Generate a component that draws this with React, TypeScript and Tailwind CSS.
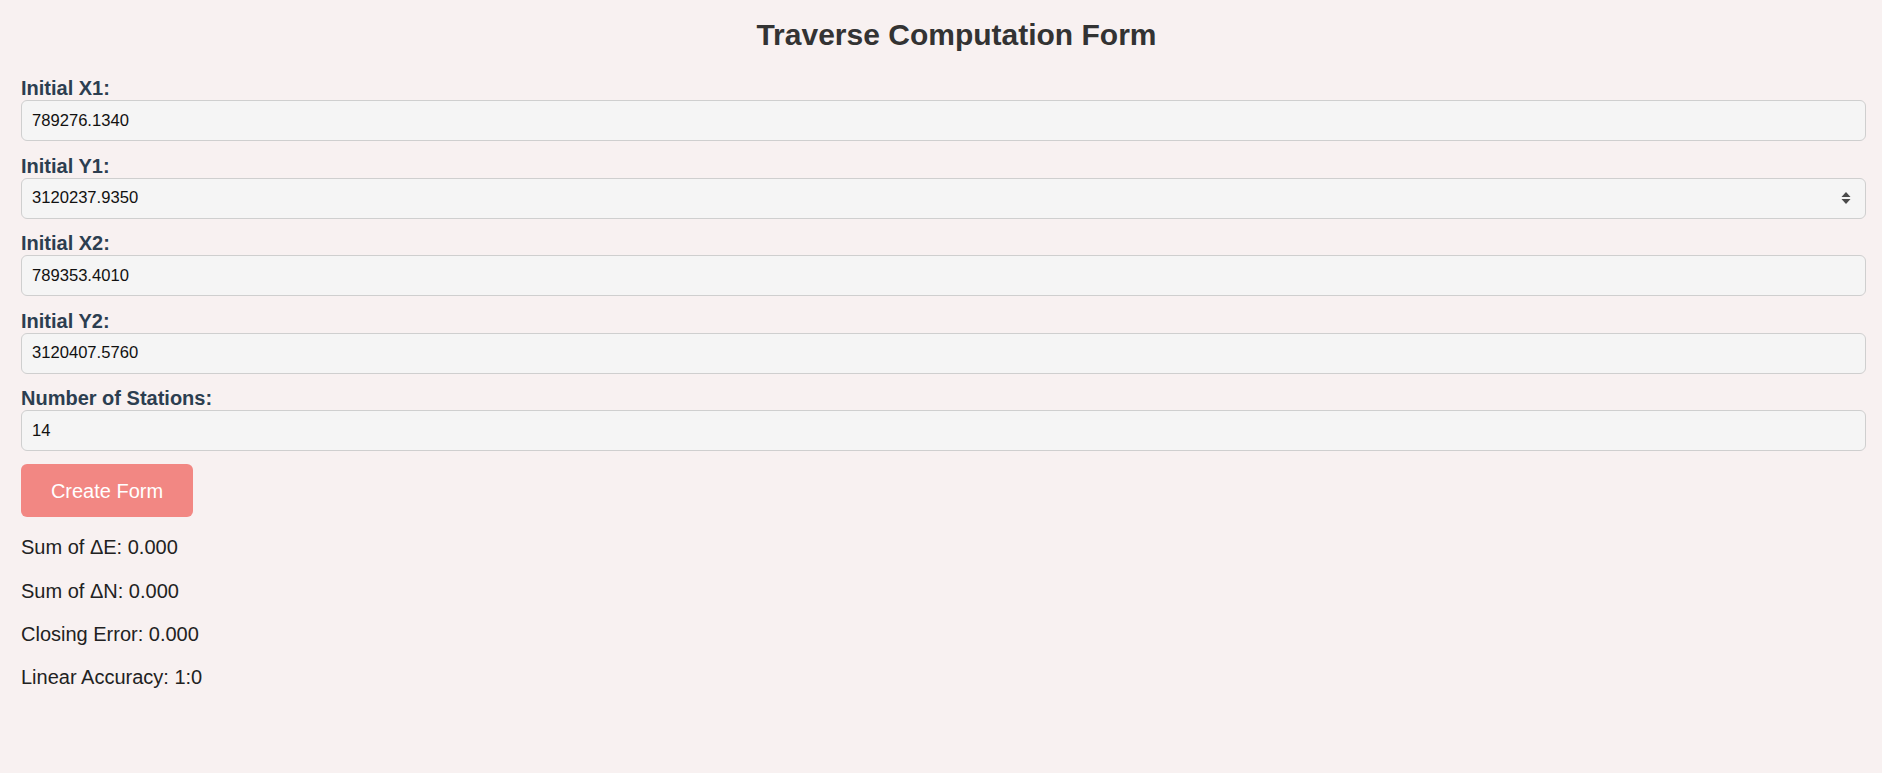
import React from "react";

const fields = [
  { label: "Initial X1:", value: "789276.1340" },
  { label: "Initial Y1:", value: "3120237.9350", spinner: true },
  { label: "Initial X2:", value: "789353.4010" },
  { label: "Initial Y2:", value: "3120407.5760" },
  { label: "Number of Stations:", value: "14" },
];

const results = [
  "Sum of ΔE: 0.000",
  "Sum of ΔN: 0.000",
  "Closing Error: 0.000",
  "Linear Accuracy: 1:0",
];

function Spinner() {
  return (
    <svg
      className="absolute right-[15px] top-1/2 -translate-y-1/2"
      width="10"
      height="14"
      viewBox="0 0 10 14"
    >
      <path d="M5 1 L9.5 6 L0.5 6 Z" fill="#4a4a4a" />
      <path d="M0.5 8 L9.5 8 L5 13 Z" fill="#4a4a4a" />
    </svg>
  );
}

export default function App() {
  return (
    <div
      className="min-h-[773px] bg-[#f8f1f1] pl-[21px] pr-[16px] pt-[18px]"
      style={{ fontFamily: '"Liberation Sans", Arial, sans-serif' }}
    >
      <h1 className="pl-[26px] text-center text-[30px] font-bold leading-[34px] text-[#333333]">
        Traverse Computation Form
      </h1>

      <form className="mt-[25px] flex flex-col gap-[13.6px]" onSubmit={(e) => e.preventDefault()}>
        {fields.map((f) => (
          <div key={f.label} className="flex flex-col gap-px">
            <label className="h-[22px] text-[20px] font-bold leading-[22px] text-[#2c3e50]">
              {f.label}
            </label>
            <div className="relative">
              <input
                type="text"
                readOnly
                value={f.value}
                className="h-[41px] w-full rounded-[6px] border border-[#cfcfcf] bg-[#f5f5f5] px-[10px] text-[16.6px] text-[#111111] outline-none"
              />
              {f.spinner && <Spinner />}
            </div>
          </div>
        ))}
      </form>

      <button
        type="button"
        className="mt-[13px] h-[53px] w-[172px] rounded-[6px] bg-[#f28783] text-[20px] text-white"
      >
        Create Form
      </button>

      <div className="mt-[19px] flex flex-col gap-[21.3px]">
        {results.map((r) => (
          <p key={r} className="h-[22px] text-[20px] leading-[22px] text-[#222222]">
            {r}
          </p>
        ))}
      </div>
    </div>
  );
}
